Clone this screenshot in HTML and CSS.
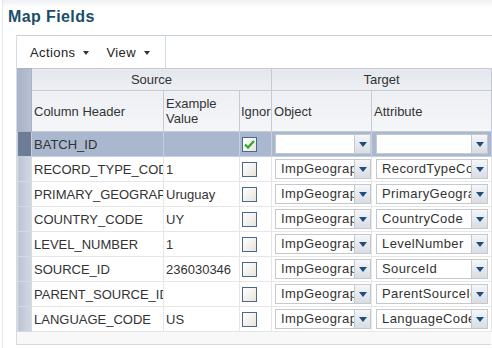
FILE: index.html
```html
<!DOCTYPE html>
<html lang="en">
<head>
    <meta charset="UTF-8">
    <title>Map Fields</title>
    <link rel="stylesheet" href="styles.css">
</head>
<body>
    <div class="panel">
        <div class="title">Map Fields</div>

        <div class="content">
            <div class="toolbar">
                <div class="menus">
                    <span class="menu">Actions <i class="caret"></i></span>
                    <span class="menu">View <i class="caret"></i></span>
                </div>
            </div>

            <table class="grid">
                <colgroup>
                    <col class="c-gutter">
                    <col class="c-header">
                    <col class="c-example">
                    <col class="c-ignore">
                    <col class="c-object">
                    <col class="c-attr">
                </colgroup>
                <thead>
                    <tr class="group-row">
                        <th class="gutter" rowspan="2"></th>
                        <th colspan="3">Source</th>
                        <th colspan="2">Target</th>
                    </tr>
                    <tr class="col-row">
                        <th>Column Header</th>
                        <th>Example Value</th>
                        <th>Ignore</th>
                        <th>Object</th>
                        <th>Attribute</th>
                    </tr>
                </thead>
                <tbody>
                    <tr class="selected">
                        <td class="gutter"></td>
                        <td>BATCH_ID</td>
                        <td></td>
                        <td><span class="check on"><svg width="11" height="9" viewBox="0 0 11 9"><path d="M1 4.5 L4 7.5 L10 1" fill="none" stroke="#2fa52f" stroke-width="2.2"/></svg></span></td>
                        <td><div class="select"><span class="val"></span><span class="btn"><i></i></span></div></td>
                        <td><div class="select"><span class="val"></span><span class="btn"><i></i></span></div></td>
                    </tr>
                    <tr>
                        <td class="gutter"></td>
                        <td>RECORD_TYPE_CODE</td>
                        <td>1</td>
                        <td><span class="check"></span></td>
                        <td><div class="select"><span class="val">ImpGeography</span><span class="btn"><i></i></span></div></td>
                        <td><div class="select"><span class="val">RecordTypeCode</span><span class="btn"><i></i></span></div></td>
                    </tr>
                    <tr>
                        <td class="gutter"></td>
                        <td>PRIMARY_GEOGRAPHY_NAME</td>
                        <td>Uruguay</td>
                        <td><span class="check"></span></td>
                        <td><div class="select"><span class="val">ImpGeography</span><span class="btn"><i></i></span></div></td>
                        <td><div class="select"><span class="val">PrimaryGeographyName</span><span class="btn"><i></i></span></div></td>
                    </tr>
                    <tr>
                        <td class="gutter"></td>
                        <td>COUNTRY_CODE</td>
                        <td>UY</td>
                        <td><span class="check"></span></td>
                        <td><div class="select"><span class="val">ImpGeography</span><span class="btn"><i></i></span></div></td>
                        <td><div class="select"><span class="val">CountryCode</span><span class="btn"><i></i></span></div></td>
                    </tr>
                    <tr>
                        <td class="gutter"></td>
                        <td>LEVEL_NUMBER</td>
                        <td>1</td>
                        <td><span class="check"></span></td>
                        <td><div class="select"><span class="val">ImpGeography</span><span class="btn"><i></i></span></div></td>
                        <td><div class="select"><span class="val">LevelNumber</span><span class="btn"><i></i></span></div></td>
                    </tr>
                    <tr>
                        <td class="gutter"></td>
                        <td>SOURCE_ID</td>
                        <td>236030346</td>
                        <td><span class="check"></span></td>
                        <td><div class="select"><span class="val">ImpGeography</span><span class="btn"><i></i></span></div></td>
                        <td><div class="select"><span class="val">SourceId</span><span class="btn"><i></i></span></div></td>
                    </tr>
                    <tr>
                        <td class="gutter"></td>
                        <td>PARENT_SOURCE_ID</td>
                        <td></td>
                        <td><span class="check"></span></td>
                        <td><div class="select"><span class="val">ImpGeography</span><span class="btn"><i></i></span></div></td>
                        <td><div class="select"><span class="val">ParentSourceId</span><span class="btn"><i></i></span></div></td>
                    </tr>
                    <tr>
                        <td class="gutter"></td>
                        <td>LANGUAGE_CODE</td>
                        <td>US</td>
                        <td><span class="check"></span></td>
                        <td><div class="select"><span class="val">ImpGeography</span><span class="btn"><i></i></span></div></td>
                        <td><div class="select"><span class="val">LanguageCode</span><span class="btn"><i></i></span></div></td>
                    </tr>
                </tbody>
            </table>
            <div class="grid-footer"></div>
        </div>
    </div>
</body>
</html>
```

FILE: styles.css
```css
* {
    margin: 0;
    padding: 0;
    box-sizing: border-box;
}
body {
    font-family: "Liberation Sans", Arial, sans-serif;
    font-size: 13px;
    color: #333;
    background: #fff;
    padding-left: 2px;
}
.panel {
    border-left: 1px solid #e3e7ec;
    height: 348px;
    background: linear-gradient(#eef0f3 0, #fff 8px);
}
.title {
    font-size: 16px;
    font-weight: bold;
    letter-spacing: 0.4px;
    color: #1b4d6b;
    padding: 8px 0 0 5px;
    height: 35px;
}
.content {
    margin-left: 13px;
    border-left: 1px solid #d6dbe2;
}
.toolbar {
    border-top: 1px solid #c6ced8;
    height: 33px;
    display: flex;
}
.menus {
    width: 149px;
    border-right: 1px solid #d6dbe2;
    display: flex;
    align-items: center;
    gap: 17px;
    padding-left: 13px;
    letter-spacing: 0.4px;
    color: #222;
}
.caret {
    display: inline-block;
    width: 0;
    height: 0;
    border-left: 3.5px solid transparent;
    border-right: 3.5px solid transparent;
    border-top: 4px solid #333;
    margin-left: 4px;
    vertical-align: middle;
}
.grid {
    border-collapse: collapse;
    table-layout: fixed;
    width: 474px;
}
.c-gutter { width: 14px; }
.c-header { width: 132px; }
.c-example { width: 76px; }
.c-ignore { width: 32px; }
.c-object { width: 100px; }
.c-attr { width: 120px; }

.grid th {
    font-weight: normal;
    color: #333;
    background: linear-gradient(#e3e6eb, #eef0f4);
    border: 1px solid #c5cad2;
    overflow: hidden;
    white-space: nowrap;
}
.group-row th {
    height: 22px;
    text-align: center;
}
.col-row th {
    height: 41px;
    text-align: left;
    padding-left: 2px;
    background: linear-gradient(#edeff3, #f5f6f8);
}
.col-row th:nth-child(2) {
    white-space: normal;
    line-height: 15px;
}
.col-row th:nth-child(3) {
    padding-left: 1px;
}
.grid th.gutter {
    background: linear-gradient(90deg, #a7b2c6, #b9c2d3);
    border-color: #a7b2c6;
}
.grid td {
    height: 25px;
    border: 1px solid #e6e6e6;
    padding-left: 2px;
    overflow: hidden;
    white-space: nowrap;
    background: #fff;
}
.grid td.gutter {
    background: linear-gradient(90deg, #bcc4d4, #d3d8e2);
    border-color: #d6dae2;
    padding: 0;
}
.grid tr.selected td {
    background: #a9b8cf;
    border-color: #c6cfdd;
}
.grid tr.selected td.gutter {
    background: #6e7d96;
}

.check {
    display: flex;
    align-items: center;
    justify-content: center;
    width: 15px;
    height: 15px;
    border: 1px solid #49698c;
    background: linear-gradient(135deg, #fff, #e6e4dc);
}

.select {
    display: flex;
    height: 20px;
    margin-left: 1px;
    border: 1px solid #c5c8cc;
    background: #fff;
}
td:last-child .select {
    margin-left: 2px;
    margin-right: 3px;
}
.val {
    flex: 1;
    overflow: hidden;
    white-space: nowrap;
    padding: 0 2px 0 5px;
    line-height: 18px;
    letter-spacing: 0.4px;
}
.btn {
    width: 16px;
    display: flex;
    align-items: center;
    justify-content: center;
    background: linear-gradient(#f4f6f8, #d8dde4);
    border-left: 1px solid #c5c8cc;
}
.btn i {
    width: 0;
    height: 0;
    border-left: 4.5px solid transparent;
    border-right: 4.5px solid transparent;
    border-top: 5px solid #1c4f80;
}

.grid-footer {
    width: 474px;
    height: 13px;
    background: #f8f8f8;
    border-bottom: 1px solid #d4d8de;
}
```
